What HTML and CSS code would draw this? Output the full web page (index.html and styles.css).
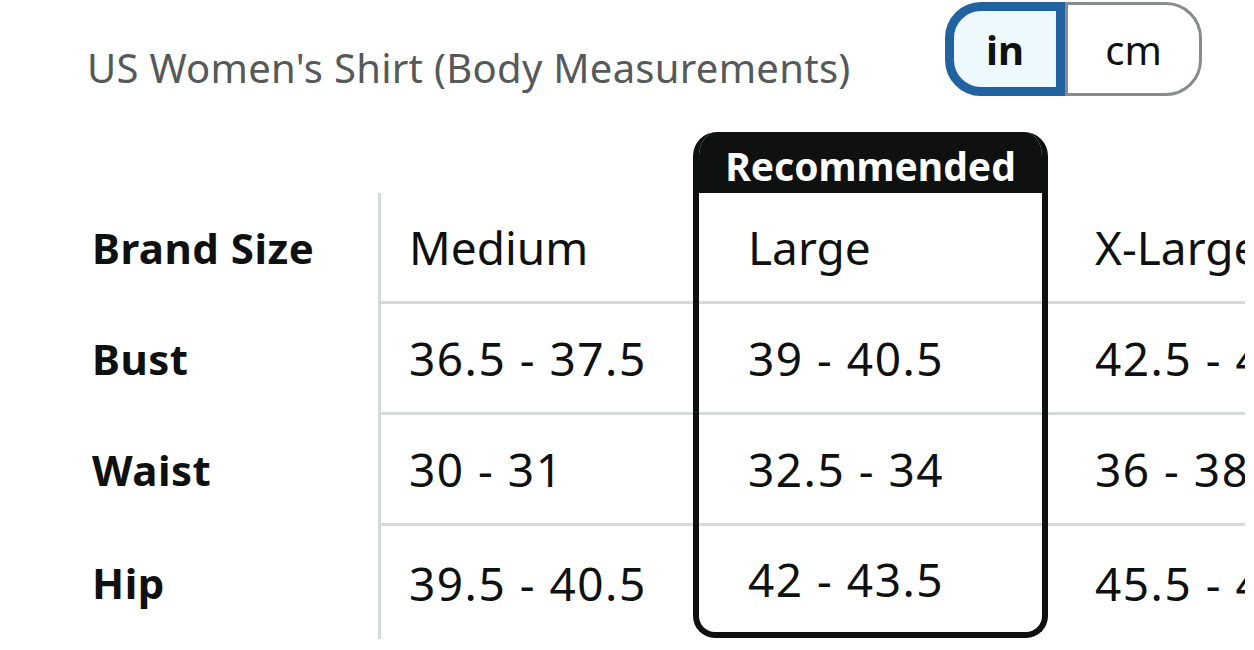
FILE: index.html
```html
<!DOCTYPE html>
<html lang="en">
<head>
<meta charset="utf-8">
<title>Size chart</title>
<link rel="stylesheet" href="styles.css">
</head>
<body>
<div class="page">
  <div class="top">
    <h1 class="title">US Women's Shirt (Body Measurements)</h1>
    <div class="toggle">
      <button class="seg seg-in">in</button>
      <button class="seg seg-cm">cm</button>
    </div>
  </div>
  <div class="chart">
    <div class="col labels">
      <div class="cell first">Brand Size</div>
      <div class="cell">Bust</div>
      <div class="cell">Waist</div>
      <div class="cell last">Hip</div>
    </div>
    <div class="col size medium">
      <div class="cell first">Medium</div>
      <div class="cell line">36.5 - 37.5</div>
      <div class="cell line">30 - 31</div>
      <div class="cell line last">39.5 - 40.5</div>
    </div>
    <div class="col size rec">
      <div class="rec-head">Recommended</div>
      <div class="cell first">Large</div>
      <div class="cell line">39 - 40.5</div>
      <div class="cell line">32.5 - 34</div>
      <div class="cell line last">42 - 43.5</div>
    </div>
    <div class="col size xl">
      <div class="cell first">X-Large</div>
      <div class="cell line">42.5 - 44</div>
      <div class="cell line">36 - 38</div>
      <div class="cell line last">45.5 - 47</div>
    </div>
  </div>
</div>
</body>
</html>
```

FILE: styles.css
```css
* { box-sizing: border-box; }

body {
  margin: 0;
  background: #ffffff;
  font-family: "Noto Sans", "Open Sans", Arial, sans-serif;
  color: #0f1111;
}

.page {
  width: 1245px;
  height: 650px;
  padding-left: 85px;
  overflow: hidden;
}

.top {
  display: flex;
  justify-content: space-between;
  align-items: flex-start;
  height: 132px;
}

.title {
  margin: 41px 0 0 2px;
  font-size: 40px;
  line-height: 54px;
  font-weight: 400;
  letter-spacing: 0.28px;
  color: #565959;
  white-space: nowrap;
}

.toggle {
  display: flex;
  margin: 2px 43px 0 0;
}

.seg {
  height: 94px;
  font-family: inherit;
  font-size: 40px;
  color: #0f1111;
  padding: 0;
  display: flex;
  align-items: center;
  justify-content: center;
}

.seg-in {
  width: 120px;
  border: 9px solid #2162a1;
  border-radius: 36px 0 0 36px;
  background: #edf8ff;
  font-weight: 700;
}

.seg-cm {
  width: 137px;
  border: 3px solid #888c8c;
  border-radius: 0 36px 36px 0;
  background: #ffffff;
  font-weight: 400;
}

.chart {
  display: flex;
  align-items: flex-start;
  width: 1160px;
}

.col {
  display: flex;
  flex-direction: column;
  flex: none;
}

.cell {
  display: flex;
  align-items: center;
  height: 111px;
  font-size: 46px;
  white-space: nowrap;
}

.cell.first { height: 108px; }
.cell.last { height: 116px; }

.line {
  border-top: 3px solid #d5d9d9;
  letter-spacing: 1.5px;
}

.labels {
  margin-top: 61px;
  width: 296px;
  border-right: 3px solid #d5d9d9;
}

.labels .cell {
  font-size: 42px;
  font-weight: 700;
  letter-spacing: 0.5px;
  padding-left: 7px;
  border-top: 3px solid transparent;
}

.labels .cell.first { border-top: 0; }

.medium {
  margin-top: 61px;
  width: 312px;
}

.medium .cell { padding-left: 28px; }

.rec {
  width: 355px;
  border: 6px solid #0f1111;
  border-top: 0;
  border-radius: 24px 24px 22px 22px;
  overflow: hidden;
}

.rec-head {
  height: 61px;
  background: #0f1111;
  color: #ffffff;
  font-size: 39px;
  font-weight: 700;
  display: flex;
  align-items: center;
  justify-content: center;
  padding-top: 6px;
  margin: 0 -6px;
}

.rec .cell { padding-left: 49px; }
.rec .cell.last { height: 109px; }

.xl {
  margin-top: 61px;
  flex: 1;
}

.xl .cell { padding-left: 47px; }
```
